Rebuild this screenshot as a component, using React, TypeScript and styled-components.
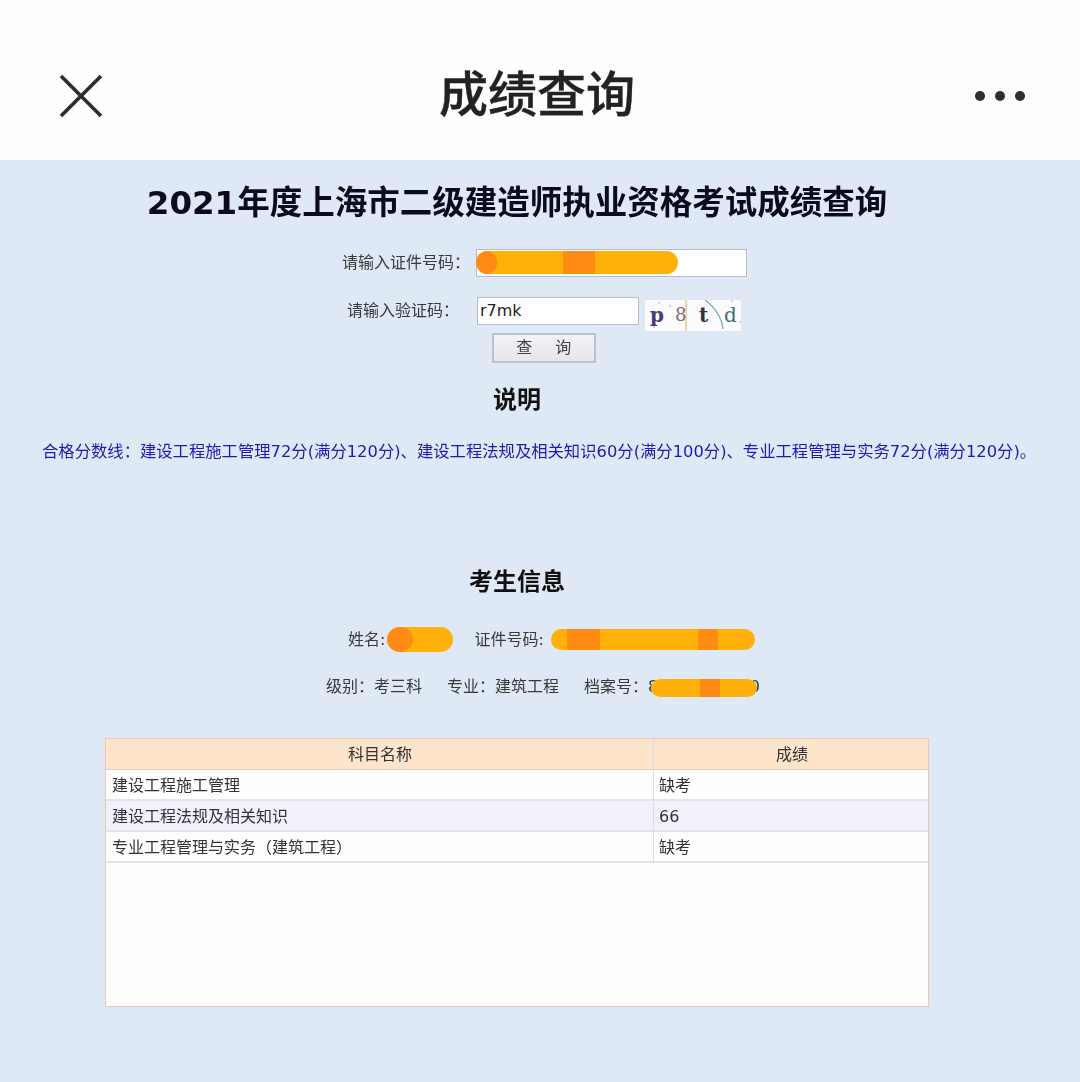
import React from "react";
import styled, { createGlobalStyle } from "styled-components";

const Global = createGlobalStyle`
	html, body { margin: 0; padding: 0; background: #dfe9f5; }
	body { font-family: "DejaVu Sans", "Noto Sans CJK SC", sans-serif; color: #333; }
`;

const Page = styled.div`
	width: 1080px;
	height: 1082px;
	overflow: hidden;
	background: #dfe9f5;
`;

// SECTION Top bar
const TopBar = styled.header`
	height: 160px;
	background: #fffefd;
	display: flex;
	align-items: center;
	justify-content: space-between;
	padding: 32px 54px 0 58px;
	box-sizing: border-box;
`;

const BarTitle = styled.h1`
	margin: 0 0 10px -2px;
	font: 500 49px/60px "Noto Sans CJK SC", sans-serif;
	-webkit-text-stroke: 0.4px #222;
	color: #222;
`;

const BarIcon = styled.svg`
	display: block;
`;

// SECTION Main column, the source is a slightly soft photo of the page
const Main = styled.main`
	width: 1034px;
	display: flex;
	flex-direction: column;
	align-items: center;
	filter: blur(0.35px);
`;

const PageTitle = styled.h2`
	margin: 22px 0 0;
	font: bold 32.5px/42px "DejaVu Sans", "Noto Sans CJK SC", sans-serif;
	color: #0b0b1e;
	white-space: nowrap;
`;

const Form = styled.div`
	align-self: flex-start;
	margin: 25px 0 0 328px;
	display: flex;
	flex-direction: column;
`;

const FormRow = styled.div<{ $gap: number }>`
	display: flex;
	align-items: center;
	margin-bottom: ${(p) => p.$gap}px;
`;

const Label = styled.label<{ $inset: number }>`
	width: 148px;
	box-sizing: border-box;
	padding-left: ${(p) => p.$inset}px;
	font-size: 16px;
	line-height: 24px;
	color: #3a3a3a;
	white-space: nowrap;
`;

const Field = styled.div<{ $width: number; $nudge?: number }>`
	position: relative;
	width: ${(p) => p.$width}px;
	height: 28px;
	margin-left: ${(p) => p.$nudge ?? 0}px;
	box-sizing: border-box;
	background: #fff;
	border: 1px solid #b4bccb;
	font-size: 16px;
	line-height: 26px;
	padding-left: 2px;
	color: #222;
`;

const Captcha = styled.svg`
	display: block;
	margin: 3px 0 -6px 6px;
`;

const QueryButton = styled.button`
	display: block;
	margin: 0 0 0 164px;
	width: 104px;
	height: 30px;
	padding: 0 0 0 3px;
	background: linear-gradient(#f2f3f6, #e4e6eb);
	border: 2px solid #b9c1ce;
	font: 16px/24px "DejaVu Sans", "Noto Sans CJK SC", sans-serif;
	letter-spacing: 3.5px;
	color: #444;
`;

const SectionTitle = styled.h3<{ $top: number }>`
	margin: ${(p) => p.$top}px 0 0;
	font: bold 24px/32px "DejaVu Sans", "Noto Sans CJK SC", sans-serif;
	color: #111;
`;

const Notice = styled.p`
	align-self: flex-start;
	margin: 24px 0 0 42px;
	font-size: 16.33px;
	line-height: 24px;
	color: #1c1caf;
	white-space: nowrap;
`;

const InfoRow = styled.div<{ $top: number; $left: number; $gap: number }>`
	align-self: flex-start;
	margin: ${(p) => p.$top}px 0 0 ${(p) => p.$left}px;
	display: flex;
	align-items: center;
	gap: ${(p) => p.$gap}px;
	font-size: 16px;
	line-height: 24px;
	color: #3a3a3a;
	white-space: nowrap;
`;

const InfoItem = styled.span`
	display: inline-flex;
	align-items: center;
`;

// SECTION Redaction marks drawn over the text
const Redaction = styled.span<{ $width: number; $height: number; $nudge?: number }>`
	display: inline-block;
	flex: none;
	width: ${(p) => p.$width}px;
	height: ${(p) => p.$height}px;
	margin-left: ${(p) => p.$nudge ?? 0}px;
	border-radius: ${(p) => p.$height / 2}px;
	background: #ffb10a;
	position: relative;
	overflow: hidden;
`;

const Patch = styled.i<{ $left: number; $width: number; $round?: boolean }>`
	position: absolute;
	top: 0;
	bottom: 0;
	left: ${(p) => p.$left}px;
	width: ${(p) => p.$width}px;
	background: #ff8a14;
	border-radius: ${(p) => (p.$round ? "50%" : "0")};
`;

const OverField = styled.span`
	position: absolute;
	left: -1px;
	top: 1px;
	display: flex;
`;

const Partial = styled.span`
	display: inline-flex;
	justify-content: space-between;
	width: 112px;
	position: relative;
`;

const OverPartial = styled.span`
	position: absolute;
	left: 3px;
	top: 4px;
	display: flex;
`;

// SECTION Table
const TableBox = styled.div`
	align-self: flex-start;
	margin: 39px 0 0 105px;
	width: 824px;
	height: 269px;
	box-sizing: border-box;
	background: #fffefd;
	border: 1px solid #f0c8ab;
`;

const TableRow = styled.div<{ $kind: "head" | "odd" | "even" }>`
	display: grid;
	grid-template-columns: 547px 272px;
	height: 31px;
	box-sizing: border-box;
	font-size: 16px;
	line-height: 31px;
	color: #333;
	background: ${(p) => (p.$kind === "head" ? "#fde4cb" : p.$kind === "even" ? "#f2f0fb" : "#fffefd")};
	border-bottom: ${(p) => (p.$kind === "head" ? "1px solid #f0c8ab" : "2px solid #e3e3ec")};
`;

const Cell = styled.div<{ $head?: boolean }>`
	padding-left: ${(p) => (p.$head ? 1 : 6)}px;
	text-align: ${(p) => (p.$head ? "center" : "left")};
	& + & {
		padding-left: ${(p) => (p.$head ? 0 : 5)}px;
		text-indent: ${(p) => (p.$head ? -4 : 0)}px;
		border-left: 1px solid ${(p) => (p.$head ? "#f0c8ab" : "#dcdce6")};
	}
`;

const rows = [
	{ name: "建设工程施工管理", score: "缺考" },
	{ name: "建设工程法规及相关知识", score: "66" },
	{ name: "专业工程管理与实务（建筑工程）", score: "缺考" },
];

export default function App() {
	return (
		<Page>
			<Global />
			<TopBar>
				<BarIcon width="44" height="44" viewBox="0 0 44 44">
					<path d="M3 2 L43 42 M43 2 L3 42" stroke="#2b2b33" strokeWidth="3.6" fill="none" />
				</BarIcon>
				<BarTitle>成绩查询</BarTitle>
				<BarIcon width="52" height="12" viewBox="0 0 52 12">
					<circle cx="6" cy="6" r="5" fill="#2d2d33" />
					<circle cx="26" cy="6" r="5" fill="#2d2d33" />
					<circle cx="46" cy="6" r="5" fill="#2d2d33" />
				</BarIcon>
			</TopBar>
			<Main>
				<PageTitle>2021年度上海市二级建造师执业资格考试成绩查询</PageTitle>
				<Form>
					<FormRow $gap={20}>
						<Label $inset={14}>请输入证件号码：</Label>
						<Field $width={271}>
							<OverField>
								<Redaction $width={202} $height={23}>
									<Patch $left={0} $width={21} $round />
									<Patch $left={87} $width={32} />
								</Redaction>
							</OverField>
						</Field>
					</FormRow>
					<FormRow $gap={8}>
						<Label $inset={19}>请输入验证码：</Label>
						<Field $width={162} $nudge={1}>r7mk</Field>
						<Captcha width="96" height="31" viewBox="0 0 96 31">
							<rect width="96" height="31" fill="#fbfbfd" />
							<path d="M41 0 V31" stroke="#f2c078" strokeWidth="1.4" />
							<path d="M60 0 Q76 12 78 29" stroke="#7fb0b0" strokeWidth="1.4" fill="none" />
							<circle cx="14" cy="3" r="0.8" fill="#9a9ab8" />
							<circle cx="25" cy="6" r="0.8" fill="#9a9ab8" />
							<circle cx="87" cy="1" r="0.8" fill="#9a9ab8" />
							<circle cx="9" cy="27" r="0.8" fill="#9a9ab8" />
							<circle cx="95" cy="22" r="0.8" fill="#9a9ab8" />
							<text x="5" y="22" fontFamily="DejaVu Serif" fontWeight="bold" fontSize="20" fill="#4b3a78">p</text>
							<text x="30" y="21" fontFamily="DejaVu Serif" fontSize="18" fill="#7a6a80">8</text>
							<text x="54" y="22" fontFamily="DejaVu Serif" fontWeight="bold" fontSize="20" fill="#303048">t</text>
							<text x="79" y="22" fontFamily="DejaVu Serif" fontSize="20" fill="#3f7068">d</text>
						</Captcha>
					</FormRow>
					<QueryButton>查　询</QueryButton>
				</Form>
				<SectionTitle $top={21}>说明</SectionTitle>
				<Notice>合格分数线：建设工程施工管理72分(满分120分)、建设工程法规及相关知识60分(满分100分)、专业工程管理与实务72分(满分120分)。</Notice>
				<SectionTitle $top={102}>考生信息</SectionTitle>
				<InfoRow $top={29} $left={348} $gap={21}>
					<InfoItem>
						姓名:
						<Redaction $width={66} $height={25} $nudge={2}>
							<Patch $left={0} $width={26} $round />
						</Redaction>
					</InfoItem>
					<InfoItem>
						证件号码:
						<Redaction $width={204} $height={21} $nudge={7}>
							<Patch $left={16} $width={33} />
							<Patch $left={147} $width={20} />
						</Redaction>
					</InfoItem>
				</InfoRow>
				<InfoRow $top={23} $left={326} $gap={25}>
					<span>级别：考三科</span>
					<span>专业：建筑工程</span>
					<InfoItem>
						档案号：
						<Partial>
							<span>8</span>
							<span>0</span>
							<OverPartial>
								<Redaction $width={106} $height={18}>
									<Patch $left={49} $width={20} />
								</Redaction>
							</OverPartial>
						</Partial>
					</InfoItem>
				</InfoRow>
				<TableBox>
					<TableRow $kind="head">
						<Cell $head>科目名称</Cell>
						<Cell $head>成绩</Cell>
					</TableRow>
					{rows.map(({ name, score }, index) => (
						<TableRow key={name} $kind={index % 2 === 1 ? "even" : "odd"}>
							<Cell>{name}</Cell>
							<Cell>{score}</Cell>
						</TableRow>
					))}
				</TableBox>
			</Main>
		</Page>
	);
}
